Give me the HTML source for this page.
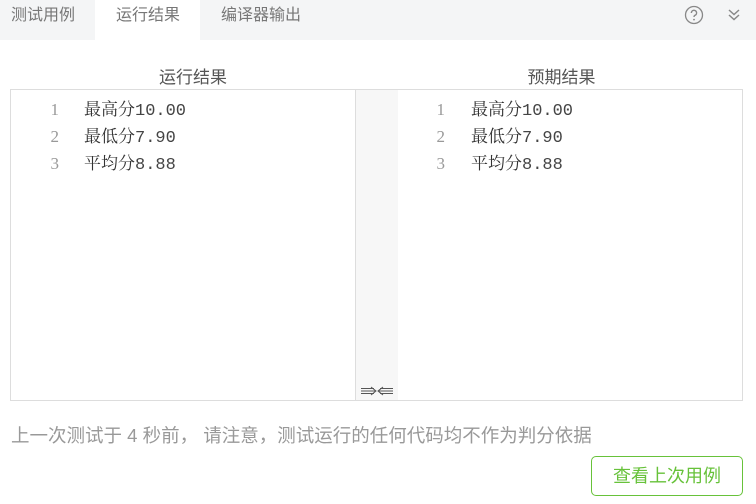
<!DOCTYPE html>
<html><head><meta charset="utf-8"><style>
*{margin:0;padding:0;box-sizing:border-box}
body{width:756px;height:504px;background:#fff;font-family:"Liberation Sans","Noto Sans CJK SC",sans-serif;position:relative;overflow:hidden}
.tabs{position:absolute;left:0;top:0;width:756px;height:40px;background:#f4f5f6}
.tab{position:absolute;top:0;height:40px;line-height:31px;font-size:16px;color:#777}
.tab.active{background:#fff}
.h{position:absolute;top:63px;font-size:17px;color:#555;text-align:center}
.panel{position:absolute;top:89px;height:312px;border:1px solid #ddd;background:#fff}
.gut{position:absolute;left:355px;top:89px;width:44px;height:312px;background:#f7f7f7;border:1px solid #ddd}
.code{position:absolute;top:0;left:0;font-size:17px;color:#333}
.ln{position:absolute;left:0;top:2px;width:48px;text-align:right;color:#999;font-family:"Liberation Serif",serif;font-size:17px;line-height:27px}
.row{position:absolute;height:27px;width:300px}
.txt{position:absolute;left:73px;top:0;white-space:nowrap;line-height:27px}
.c{font-family:"Noto Serif CJK SC","Noto Sans CJK SC",serif}
.m{font-family:"Liberation Mono",monospace;font-size:17px;color:#444}
.note{position:absolute;left:11px;top:422px;font-size:18.5px;color:#999;white-space:nowrap}
.btn{position:absolute;left:591px;top:456px;width:152px;height:40px;border:1px solid #67c23a;border-radius:5px;color:#67c23a;font-size:18px;line-height:38px;text-align:center}
</style></head><body>
<div class="tabs">
<div class="tab" style="left:0;width:95px;padding-left:11px">测试用例</div>
<div class="tab active" style="left:95px;width:105px;padding-left:21px">运行结果</div>
<div class="tab" style="left:200px;width:122px;padding-left:21px">编译器输出</div>
<svg style="position:absolute;left:684px;top:5px" width="20" height="20" viewBox="0 0 20 20"><circle cx="10" cy="10" r="8.5" fill="none" stroke="#888" stroke-width="1.3"/><path d="M7.4 8a2.6 2.6 0 1 1 3.6 2.3c-.8.4-1 .9-1 1.7" fill="none" stroke="#888" stroke-width="1.4"/><circle cx="10" cy="14.6" r="0.9" fill="#888"/></svg>
<svg style="position:absolute;left:727px;top:8px" width="14" height="14" viewBox="0 0 14 14"><path d="M2 2l5 4.5 5-4.5M2 7l5 4.5 5-4.5" fill="none" stroke="#888" stroke-width="1.5"/></svg>
</div>
<div class="h" style="left:10px;width:366px">运行结果</div>
<div class="h" style="left:399px;width:325px">预期结果</div>
<div class="panel" style="left:10px;width:346px">
<div class="code">
<div class="row" style="top:4px"><span class="ln">1</span><span class="txt"><span class="c">最高分</span><span class="m">10.00</span></span></div>
<div class="row" style="top:31px"><span class="ln">2</span><span class="txt"><span class="c">最低分</span><span class="m">7.90</span></span></div>
<div class="row" style="top:58px"><span class="ln">3</span><span class="txt"><span class="c">平均分</span><span class="m">8.88</span></span></div>
</div></div>
<div class="gut"><svg style="position:absolute;left:5px;bottom:4px" width="32" height="10" viewBox="0 0 32 10"><path d="M0 2.5h13M0 5h14M0 7.5h13M10 1l5 4-5 4M32 2.5h-13M32 5h-14M32 7.5h-13M22 1l-5 4 5 4" fill="none" stroke="#555" stroke-width="1"/></svg></div>
<div class="panel" style="left:398px;width:345px;border-left:none">
<div class="code">
<div class="row" style="top:4px"><span class="ln" style="left:-1px">1</span><span class="txt"><span class="c">最高分</span><span class="m">10.00</span></span></div>
<div class="row" style="top:31px"><span class="ln" style="left:-1px">2</span><span class="txt"><span class="c">最低分</span><span class="m">7.90</span></span></div>
<div class="row" style="top:58px"><span class="ln" style="left:-1px">3</span><span class="txt"><span class="c">平均分</span><span class="m">8.88</span></span></div>
</div></div>
<div class="note">上一次测试于 4 秒前， 请注意，测试运行的任何代码均不作为判分依据</div>
<div class="btn">查看上次用例</div>
</body></html>
